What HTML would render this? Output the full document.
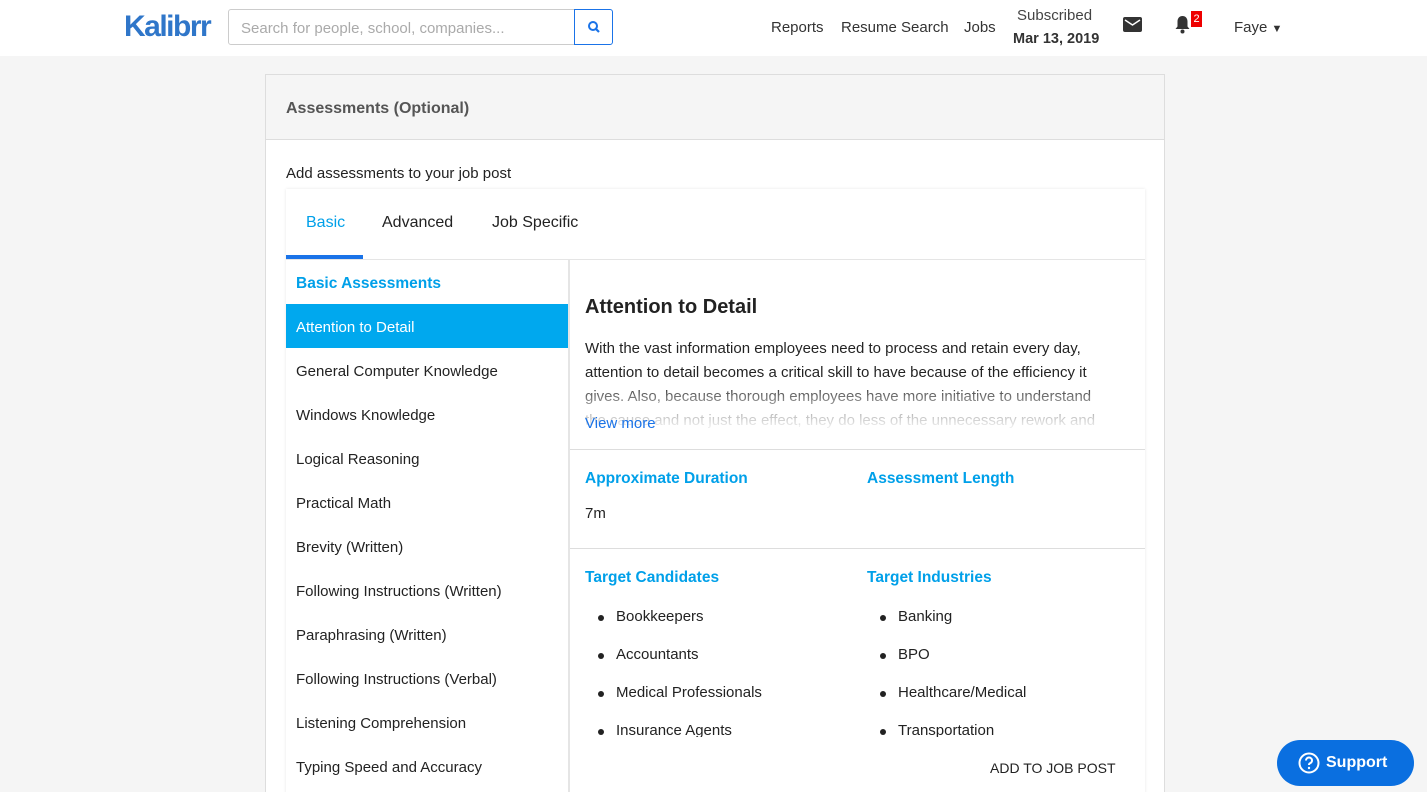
<!DOCTYPE html>
<html><head><meta charset="utf-8"><style>
*{box-sizing:border-box;margin:0;padding:0}
html,body{width:1427px;height:792px;overflow:hidden}
body{background:#f5f5f5;font-family:"Liberation Sans",sans-serif;color:#222;font-size:15px;position:relative}
.hdr{position:absolute;left:0;top:0;width:1427px;height:56px;background:#fff}
.logo{position:absolute;left:124px;top:10px;font-size:30px;font-weight:bold;color:#2f76c9;letter-spacing:-1.5px}
.search{position:absolute;left:228px;top:9px;width:347px;height:36px;border:1px solid #ccc;border-radius:3px 0 0 3px;padding:10px 12px;color:#aaa;font-size:15px}
.sbtn{position:absolute;left:574px;top:9px;width:39px;height:36px;border:1px solid #1a73e8;border-radius:0 3px 3px 0}
.nav{position:absolute;top:19px;font-size:15px;color:#333}
.card{position:absolute;left:265px;top:74px;width:900px;height:718px;background:#fff;border:1px solid #ddd;border-bottom:none;overflow:hidden}
.ch{height:65px;background:#f5f5f5;border-bottom:1px solid #ddd;padding:25px 20px;font-size:16px;color:#555;font-weight:bold}
.t1{position:absolute;left:20px;top:90px;font-size:15px}
.box{position:absolute;left:20px;top:114px;width:859px;height:620px;box-shadow:0 0 3px rgba(0,0,0,.1)}
.tabs{height:71px;border-bottom:1px solid #e5e5e5;position:relative}
.tab{position:absolute;top:25px;font-size:16px}
.left{position:absolute;left:0;top:71px;width:284px;height:560px;border-right:2px solid #e5e5e5}
.li{height:44px;padding:15px 10px 0;font-size:15px}
.right{position:absolute;left:284px;top:71px;width:575px}
.blue{color:#00a0e9;font-weight:bold;font-size:15.5px}
ul{list-style:none}
ul li{position:relative;padding-left:31px;height:38px;font-size:15px}
ul li:before{content:"";position:absolute;left:13px;top:7px;width:6px;height:6px;border-radius:50%;background:#222}
</style></head><body>
<div class="hdr">
<div class="logo">Kalibrr</div>
<div class="search">Search for people, school, companies...</div>
<div class="sbtn"><svg width="37" height="34" viewBox="0 0 37 34"><circle cx="18" cy="16" r="4" fill="none" stroke="#1a73e8" stroke-width="2"/><path d="M21 19l3 3" stroke="#1a73e8" stroke-width="2.2"/></svg></div>
<div class="nav" style="left:771px">Reports</div>
<div class="nav" style="left:841px">Resume Search</div>
<div class="nav" style="left:964px">Jobs</div>
<div style="position:absolute;left:1017px;top:7px;font-size:15px;color:#444">Subscribed</div>
<div style="position:absolute;left:1013px;top:31px;font-size:14.5px;color:#333;font-weight:bold">Mar 13, 2019</div>
<svg style="position:absolute;left:1123px;top:17px" width="19" height="15" viewBox="0 0 19 15"><rect width="19" height="15" rx="2" fill="#333"/><path d="M2 3l7.5 5L17 3" fill="none" stroke="#fff" stroke-width="1.5"/></svg>
<svg style="position:absolute;left:1174px;top:15px" width="17" height="19" viewBox="0 0 17 19"><path d="M8.5 1c3 0 5 2.3 5 5.5v5l2 2.5H1.5l2-2.5v-5C3.5 3.3 5.5 1 8.5 1z" fill="#333"/><circle cx="8.5" cy="16.5" r="2" fill="#333"/></svg>
<div style="position:absolute;left:1191px;top:11px;width:11px;height:16px;background:#e00;color:#fff;font-size:11px;text-align:center;line-height:16px">2</div>
<div class="nav" style="left:1234px">Faye <span style="font-size:11px">▼</span></div>
</div>
<div class="card">
<div class="ch">Assessments (Optional)</div>
<div class="t1">Add assessments to your job post</div>
<div class="box">
<div class="tabs">
<div class="tab" style="left:20px;color:#00a0e9">Basic</div>
<div style="position:absolute;left:0;top:66px;width:77px;height:4px;background:#1a73e8"></div>
<div class="tab" style="left:96px">Advanced</div>
<div class="tab" style="left:206px">Job Specific</div>
</div>
<div class="left">
<div class="li blue">Basic Assessments</div>
<div class="li" style="background:#00a8ee;color:#fff">Attention to Detail</div>
<div class="li">General Computer Knowledge</div>
<div class="li">Windows Knowledge</div>
<div class="li">Logical Reasoning</div>
<div class="li">Practical Math</div>
<div class="li">Brevity (Written)</div>
<div class="li">Following Instructions (Written)</div>
<div class="li">Paraphrasing (Written)</div>
<div class="li">Following Instructions (Verbal)</div>
<div class="li">Listening Comprehension</div>
<div class="li">Typing Speed and Accuracy</div>
</div>
<div class="right">
<div style="padding:36px 30px 0 15px;height:190px;border-bottom:1px solid #ddd;position:relative">
<div style="font-size:20px;font-weight:bold;color:#222">Attention to Detail</div>
<div style="margin-top:18px;line-height:24px;font-size:15px;height:94px;overflow:hidden;background:linear-gradient(#222 0,#222 48px,#777 60px,#eee 90px);-webkit-background-clip:text;color:transparent">With the vast information employees need to process and retain every day, attention to detail becomes a critical skill to have because of the efficiency it gives. Also, because thorough employees have more initiative to understand the cause and not just the effect, they do less of the unnecessary rework and</div>
<div style="position:absolute;left:15px;top:155px;color:#1a73e8;font-size:15px">View more</div>
</div>
<div style="height:99px;border-bottom:1px solid #ddd;position:relative">
<div class="blue" style="position:absolute;left:15px;top:20px">Approximate Duration</div>
<div style="position:absolute;left:15px;top:55px">7m</div>
<div class="blue" style="position:absolute;left:297px;top:20px">Assessment Length</div>
</div>
<div style="position:relative;height:188px;overflow:hidden">
<div class="blue" style="position:absolute;left:15px;top:20px">Target Candidates</div>
<ul style="position:absolute;left:15px;top:59px"><li>Bookkeepers</li><li>Accountants</li><li>Medical Professionals</li><li>Insurance Agents</li></ul>
<div class="blue" style="position:absolute;left:297px;top:20px">Target Industries</div>
<ul style="position:absolute;left:297px;top:59px"><li>Banking</li><li>BPO</li><li>Healthcare/Medical</li><li>Transportation</li></ul>
</div>
<div style="position:absolute;left:420px;top:500px;font-size:14px">ADD TO JOB POST</div>
</div>
</div>
</div>
<div style="position:absolute;left:1277px;top:740px;width:137px;height:46px;border-radius:23px;background:#0a6fe0;color:#fff;font-weight:bold;font-size:16px;padding:14px 0 0 49px">Support</div>
<svg style="position:absolute;left:1298px;top:752px" width="22" height="22" viewBox="0 0 22 22"><circle cx="11" cy="11" r="9.5" fill="none" stroke="#fff" stroke-width="2"/><path d="M8 8.5a3 3 0 1 1 4 2.8c-.8.3-1 .9-1 1.7" fill="none" stroke="#fff" stroke-width="2"/><circle cx="11" cy="16" r="1.2" fill="#fff"/></svg>
</body></html>
